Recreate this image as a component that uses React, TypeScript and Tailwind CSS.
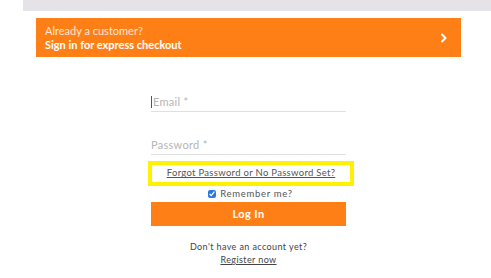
import React from 'react';

const font = { fontFamily: 'Lato, "Liberation Sans", sans-serif' };

export default function App() {
  return (
    <div className="w-[491px] h-[278px] bg-white overflow-hidden" style={font}>
      <div className="ml-[23px] h-[11px] bg-[#e5e3e7]" />

      <div className="mt-[7px] ml-[36px] w-[425px] h-[39px] bg-[#ff7f17] flex items-center justify-between pl-[9px] pr-[13px]">
        <div className="flex flex-col leading-[14px]">
          <span className="text-[11px] text-white/80">Already a customer?</span>
          <span className="text-[11px] font-bold text-white">Sign in for express checkout</span>
        </div>
        <svg width="8" height="10" viewBox="0 0 8 10" fill="none">
          <path d="M2 1.5 L5.5 5 L2 8.5" stroke="white" strokeWidth="2" strokeLinecap="round" strokeLinejoin="round" />
        </svg>
      </div>

      <div className="ml-[151px] w-[195px] flex flex-col">
        <div className="mt-[36px] h-[19px] flex items-center border-b border-[#fbd9c0]">
          <span className="w-px h-[12px] bg-[#555]" />
          <span className="text-[11px] text-[#b5b5b5] ml-px tracking-[0.3px]">Email *</span>
        </div>
        <div className="mt-[24px] h-[19px] flex items-center border-b border-[#e2e2e2]">
          <span className="text-[11px] text-[#b5b5b5] tracking-[0.3px]">Password *</span>
        </div>

        <div className="mt-[6px] -ml-[3px] w-[206px] h-[25px] border-[4px] border-[#fff200] flex items-center justify-center">
          <span className="text-[9.5px] text-[#555] underline tracking-[0.3px]">Forgot Password or No Password Set?</span>
        </div>

        <label className="mt-[3px] h-[10px] flex items-center justify-center gap-[4px] pl-[4px]">
          <input type="checkbox" defaultChecked className="w-[8px] h-[8px] m-0 accent-[#2a7ae2]" />
          <span className="text-[9.5px] text-[#555] tracking-[0.7px]">Remember me?</span>
        </label>

        <button className="mt-[3px] h-[24px] w-full bg-[#ff7f17] text-white text-[11px] font-bold tracking-[0.4px]">Log In</button>

        <div className="mt-[14px] flex flex-col items-center leading-[13px]">
          <span className="text-[9px] text-[#444] tracking-[0.4px]">Don't have an account yet?</span>
          <span className="text-[9px] text-[#444] underline tracking-[0.4px]">Register now</span>
        </div>
      </div>
    </div>
  );
}
